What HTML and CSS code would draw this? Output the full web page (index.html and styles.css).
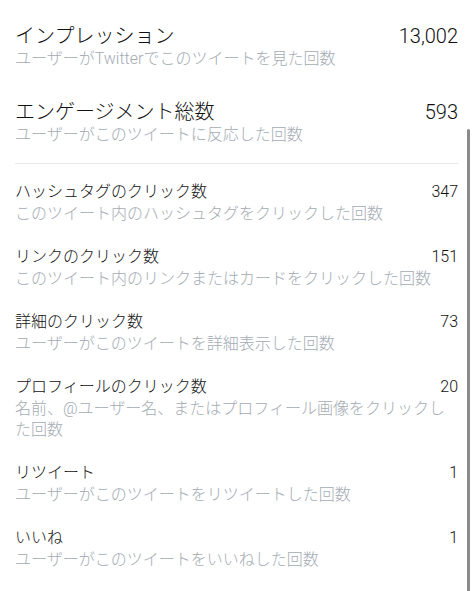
FILE: index.html
```html
<!DOCTYPE html>
<html lang="ja">
<head>
    <meta charset="UTF-8">
    <meta name="viewport" content="width=device-width, initial-scale=1.0">
    <title>ツイートアクティビティ</title>
    <link rel="stylesheet" href="styles.css">
</head>
<body>
    <div class="activity">
        <div class="summary">
            <div class="stat big">
                <div class="stat-head">
                    <span class="label">インプレッション</span>
                    <span class="count">13,002</span>
                </div>
                <p class="desc">ユーザーがTwitterでこのツイートを見た回数</p>
            </div>
            <div class="stat big">
                <div class="stat-head">
                    <span class="label">エンゲージメント総数</span>
                    <span class="count">593</span>
                </div>
                <p class="desc">ユーザーがこのツイートに反応した回数</p>
            </div>
        </div>

        <div class="details">
            <div class="stat">
                <div class="stat-head">
                    <span class="label">ハッシュタグのクリック数</span>
                    <span class="count">347</span>
                </div>
                <p class="desc">このツイート内のハッシュタグをクリックした回数</p>
            </div>
            <div class="stat">
                <div class="stat-head">
                    <span class="label">リンクのクリック数</span>
                    <span class="count">151</span>
                </div>
                <p class="desc">このツイート内のリンクまたはカードをクリックした回数</p>
            </div>
            <div class="stat">
                <div class="stat-head">
                    <span class="label">詳細のクリック数</span>
                    <span class="count">73</span>
                </div>
                <p class="desc">ユーザーがこのツイートを詳細表示した回数</p>
            </div>
            <div class="stat">
                <div class="stat-head">
                    <span class="label">プロフィールのクリック数</span>
                    <span class="count">20</span>
                </div>
                <p class="desc">名前、@ユーザー名、またはプロフィール画像をクリックした回数</p>
            </div>
            <div class="stat">
                <div class="stat-head">
                    <span class="label">リツイート</span>
                    <span class="count">1</span>
                </div>
                <p class="desc">ユーザーがこのツイートをリツイートした回数</p>
            </div>
            <div class="stat">
                <div class="stat-head">
                    <span class="label">いいね</span>
                    <span class="count">1</span>
                </div>
                <p class="desc">ユーザーがこのツイートをいいねした回数</p>
            </div>
        </div>
    </div>

    <div class="scroll-indicator"></div>
</body>
</html>
```

FILE: styles.css
```css
body {
    font-family: Roboto, "Liberation Sans", "Noto Sans CJK JP", sans-serif;
    font-weight: 300;
    background-color: #fff;
    color: #111;
    margin: 0;
    padding: 0;
    overflow: hidden;
}
.activity {
    padding: 8px 15px 0;
}
.summary {
    border-bottom: 1px solid #e6e9ec;
    padding-bottom: 3px;
}
.details {
    padding-top: 6px;
}
.stat {
    padding: 11px 0;
}
.stat.big {
    padding: 16px 0 15px;
}
.stat-head {
    display: flex;
    justify-content: space-between;
    align-items: baseline;
    font-size: 16px;
    line-height: 22px;
}
.stat.big .stat-head {
    font-size: 20px;
    line-height: 24px;
}
.count {
    color: #111;
}
.desc {
    margin: 0;
    font-size: 16px;
    line-height: 21px;
    color: #a3abb3;
}
.scroll-indicator {
    position: fixed;
    top: 129px;
    right: 3px;
    bottom: 0;
    width: 3px;
    background-color: #8a8a8a;
    border-radius: 2px 2px 0 0;
}
```
